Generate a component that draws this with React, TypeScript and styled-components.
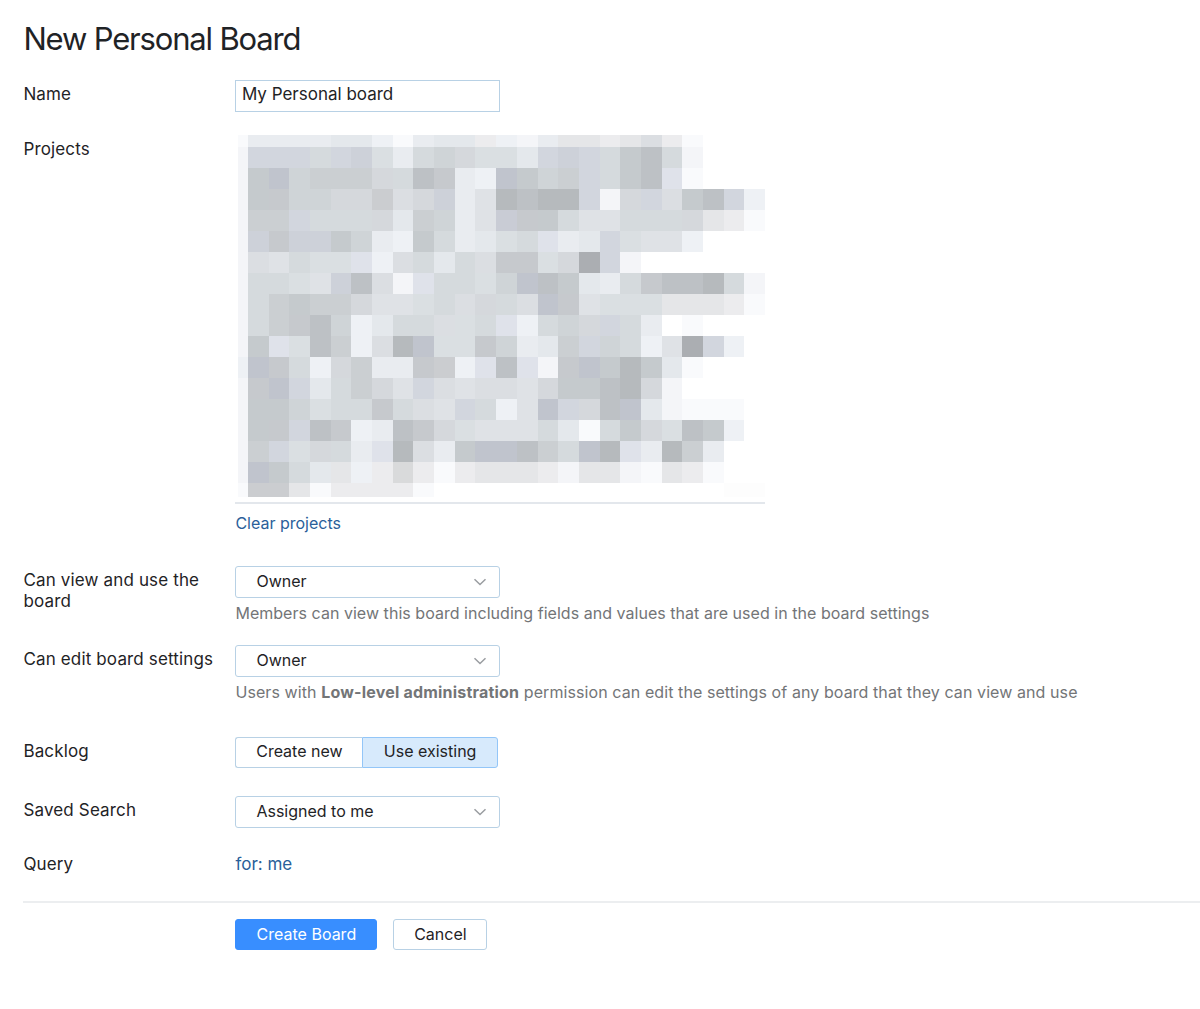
import React, { useState } from "react";
import styled, { createGlobalStyle } from "styled-components";

// one character per tile, see TILE_COLORS
const TILES = [
  "nkkkkjjlnkjjxlmkwwxwqxn...",
  "mFFFgFEhkgfphhjFEFgdcgm...",
  "mdCfeeepgcsklCdfeFgdcIn...",
  "mdsffpprqpEkibcbbFmpFqdcFl",
  "meeFgggpjefkiDsdgiigggpwxn",
  "mEsEEdfkldgkjhgIkjFhiil...",
  "mqighhIlqgjgqsshpaFm......",
  "mgghiEcqmIgghfCcdjkgsccbgm",
  "mgedeepiihgqpgqCsihhhwwwxn",
  "mgescfljggqhgIlgfpFgk.n...",
  "mdIhcelqbChhsfkjeFfgliaFl.",
  "lCsglpekksrlIcImsCdbdjn...",
  "msCFjgepiFqiqqipddcbpm....",
  "mddfhggsgqiFgliCFpcCjmnnn.",
  "mdsFcslkcsphiiigjngdphcdl.",
  "meFhpgkIbqkdCCcegCbIkbek..",
  "mCdgjwlxyxnxwwwxmwwmnwxn..",
  "nrrwnxxxxn..............oo",
];

const TILE_COLORS: Record<string, string> = {
  a: "#abaeb2",
  b: "#b6babd",
  c: "#bdc1c5",
  d: "#c5cacd",
  e: "#cbcfd2",
  f: "#cfd4d7",
  g: "#d5dadd",
  h: "#dadfe2",
  i: "#dfe2e6",
  j: "#e4e8ec",
  k: "#e9ecf0",
  l: "#eef1f5",
  m: "#f4f5f8",
  n: "#f9fafc",
  o: "#fdfdfd",
  p: "#d5d8dc",
  q: "#dbdee2",
  r: "#cbcdd0",
  s: "#c6c9cd",
  w: "#e5e6e8",
  x: "#ececee",
  y: "#d9dadb",
  C: "#c0c4cd",
  D: "#c9ccd5",
  E: "#cdd1d9",
  F: "#d2d6de",
  I: "#dfe2ea",
  ".": "#ffffff",
};

function Select({ value }: { value: string }): JSX.Element {
  return (
    <SelectButton>
      {value}
      <svg width="14" height="8" viewBox="0 0 14 8" fill="none">
        <path d="M1.5 1.2L7 6.5L12.5 1.2" stroke="#9a9da1" strokeWidth="1.5" />
      </svg>
    </SelectButton>
  );
}

export default function App(): JSX.Element {
  const [name, setName] = useState("My Personal board");
  const [backlog, setBacklog] = useState("Use existing");

  return (
    <>
      <GlobalStyle />
      <Page>
        <Title>New Personal Board</Title>
        <Row $height={55}>
          <Label>Name</Label>
          <NameInput
            value={name}
            onChange={(e: React.ChangeEvent<HTMLInputElement>) =>
              setName(e.target.value)
            }
          />
        </Row>
        <Row $height={431}>
          <Label>Projects</Label>
          <Field>
            <ProjectList>
              {TILES.join("")
                .split("")
                .map((tile, i) => (
                  <Tile key={i} $color={TILE_COLORS[tile]} />
                ))}
            </ProjectList>
            <ClearLink>Clear projects</ClearLink>
          </Field>
        </Row>
        <Row $height={79}>
          <Label>Can view and use the board</Label>
          <Field>
            <Select value="Owner" />
            <Hint $spacing={0.035}>
              Members can view this board including fields and values that are
              used in the board settings
            </Hint>
          </Field>
        </Row>
        <Row $height={92}>
          <Label>Can edit board settings</Label>
          <Field>
            <Select value="Owner" />
            <Hint $spacing={0.085}>
              Users with <b>Low-level administration</b> permission can edit the
              settings of any board that they can view and use
            </Hint>
          </Field>
        </Row>
        <Row $height={59}>
          <Label>Backlog</Label>
          <ButtonGroup>
            {["Create new", "Use existing"].map((option) => (
              <GroupButton
                key={option}
                $active={option === backlog}
                onClick={() => setBacklog(option)}
              >
                {option}
              </GroupButton>
            ))}
          </ButtonGroup>
        </Row>
        <Row $height={54}>
          <Label>Saved Search</Label>
          <Select value="Assigned to me" />
        </Row>
        <Row $height={51}>
          <Label>Query</Label>
          <QueryLink>for: me</QueryLink>
        </Row>
        <Footer>
          <FormButton $primary $width={142}>
            Create Board
          </FormButton>
          <FormButton $width={94}>Cancel</FormButton>
        </Footer>
      </Page>
    </>
  );
}

const GlobalStyle = createGlobalStyle`
  * {
    box-sizing: border-box;
  }

  body {
    margin: 0;
    background-color: white;
    color: #1f2326;
    font-family: Inter, "Liberation Sans", sans-serif;
    font-size: 17px;
    line-height: 21px;
  }

  button,
  input {
    font: inherit;
    color: inherit;
    letter-spacing: inherit;
  }
`;

const Page = styled.main`
  height: 1009px;
  padding: 19px 0 0 23.4px;
  overflow: hidden;
`;

const Title = styled.h1`
  height: 61px;
  margin: 0;
  font-size: 31px;
  font-weight: 400;
  line-height: 40px;
  letter-spacing: -1.17px;
`;

const Row = styled.div<{ $height: number }>`
  display: grid;
  grid-template-columns: 196px 1fr;
  column-gap: 16px;
  align-items: start;
  height: ${(props) => props.$height}px;
`;

const Label = styled.div`
  padding-top: 4px;
  letter-spacing: 0.15px;
`;

const Field = styled.div``;

const NameInput = styled.input`
  width: 265px;
  height: 32px;
  padding: 0 6px 4px 5.5px;
  border: 1.5px solid #b8d1e5;
  outline: none;
`;

const ProjectList = styled.div`
  display: grid;
  grid-template-columns: 9.5px repeat(25, 20.69px);
  grid-template-rows: 12px repeat(16, 21px) 14px;
  width: 530px;
  height: 368.5px;
  padding-left: 3px;
  border-bottom: 2px solid #e3e7ec;
`;

const Tile = styled.div<{ $color: string }>`
  background-color: ${(props) => props.$color};
`;

const ClearLink = styled.a`
  display: block;
  margin-top: 9px;
  color: #2a5f9a;
  font-size: 16px;
  cursor: pointer;
`;

const QueryLink = styled(ClearLink)`
  margin-top: 4px;
  font-size: 17px;
`;

const SelectButton = styled.button`
  display: flex;
  justify-content: space-between;
  align-items: center;
  width: 265px;
  height: 32px;
  padding: 0 12px 2px 20px;
  border: 1.5px solid #b8d1e5;
  border-radius: 3px;
  background-color: white;
  font-size: 16px;
  cursor: pointer;

  svg {
    position: relative;
    top: 1px;
  }
`;

const Hint = styled.div<{ $spacing: number }>`
  margin-top: 5px;
  color: #737577;
  font-size: 16px;
  letter-spacing: ${(props) => props.$spacing}px;
  white-space: nowrap;

  b {
    letter-spacing: 0.2px;
  }
`;

const ButtonGroup = styled.div`
  display: flex;
`;

const GroupButton = styled.button<{ $active: boolean }>`
  width: ${(props) => (props.$active ? 135.5 : 127)}px;
  height: 31px;
  padding: 0 0 2px;
  border: 1.5px solid ${(props) => (props.$active ? "#93c6f8" : "#b8d1e5")};
  background-color: ${(props) => (props.$active ? "#d7eafc" : "white")};
  font-size: 16px;
  cursor: pointer;

  &:first-child {
    border-right: none;
    border-radius: 3px 0 0 3px;
  }

  &:last-child {
    border-radius: 0 3px 3px 0;
  }
`;

const Footer = styled.footer`
  display: flex;
  gap: 16px;
  padding: 16px 0 0 212px;
  border-top: 2px solid #eceef0;
`;

const FormButton = styled.button<{ $primary?: boolean; $width: number }>`
  width: ${(props) => props.$width}px;
  height: 31px;
  padding: 0 0 1px;
  border: 1.5px solid ${(props) => (props.$primary ? "#388eff" : "#b8d1e5")};
  border-radius: 3px;
  background-color: ${(props) => (props.$primary ? "#388eff" : "white")};
  color: ${(props) => (props.$primary ? "white" : "#1f2326")};
  font-size: 16px;
  cursor: pointer;
`;
